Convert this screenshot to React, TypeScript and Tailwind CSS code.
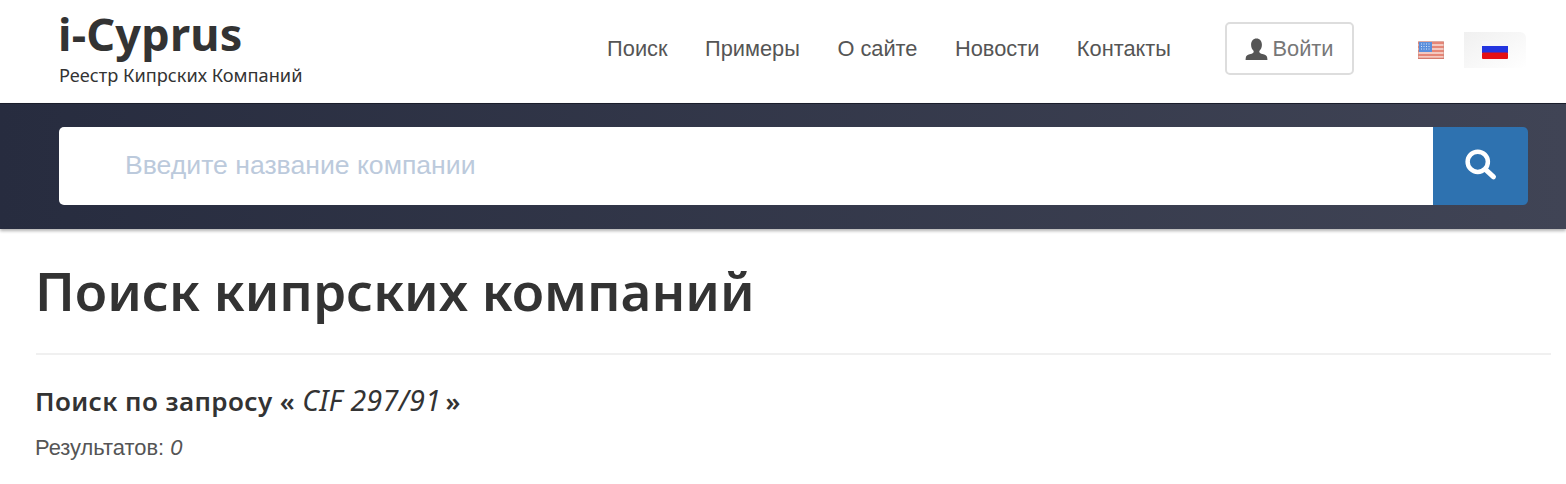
const navItems = ['Поиск', 'Примеры', 'О сайте', 'Новости', 'Контакты'];

function UserIcon() {
  return (
    <svg viewBox="0 0 24 24" preserveAspectRatio="none" className="-ml-[2px] h-[25px] w-[25px]" fill="#555555">
      <path d="M12 1.500c-3.200 0-5.200 2.600-5.200 5.900 0 2.400.9 4.500 2.300 5.700.3.300.3 1 .1 1.500-.3.700-1.200 1.200-2.900 1.800-2.500.8-4.400 1.400-4.600 3.500l-.2 2.100h21l-.2-2.100c-.2-2.100-2.100-2.700-4.600-3.500-1.700-.6-2.600-1.100-2.900-1.800-.2-.5-.2-1.200.1-1.500 1.400-1.200 2.300-3.300 2.300-5.700 0-3.300-2-5.900-5.200-5.900z" />
    </svg>
  );
}

function SearchIcon() {
  return (
    <svg viewBox="0 0 32 32" className="mb-[4px] mr-[2px] h-[36px] w-[36px]" fill="none" stroke="#ffffff" strokeWidth="4">
      <circle cx="14" cy="14" r="9" />
      <path d="M21 21 L28 27.500" strokeLinecap="round" strokeWidth="4.400" />
    </svg>
  );
}

function UsFlag() {
  return (
    <svg viewBox="0 0 26 18" className="h-[18px] w-[26px]">
      <rect width="26" height="18" rx="1" fill="#f4c9c0" />
      <path d="M0 2h26M0 6h26M0 10h26M0 14h26M0 17.500h26" stroke="#e0705f" strokeWidth="1.300" />
      <rect x="1" y="1" width="13" height="10" fill="#5b8fdc" />
      <path d="M3 3h9M3 5.500h9M3 8h9" stroke="#dbe7fa" strokeWidth="1" strokeDasharray="1 1.500" />
      <rect x="0.300" y="0.300" width="25.400" height="17.400" rx="1" fill="none" stroke="#c98a80" strokeWidth="0.600" />
    </svg>
  );
}

function RuFlag() {
  return (
    <svg viewBox="0 0 26 18" className="h-[18px] w-[26px]">
      <rect width="26" height="6" fill="#f6f6fa" />
      <rect y="5" width="26" height="7" fill="#2234e0" />
      <rect y="11.500" width="26" height="6.500" rx="1" fill="#e40f14" />
    </svg>
  );
}

export default function App() {
  return (
    <div className="h-[484px] w-[1566px] overflow-hidden bg-white font-['Liberation_Sans',sans-serif] text-[#333333]">
      <header className="flex h-[103px] items-start justify-between pl-[58px] pr-[40px]">
        <div className="pt-[6px]">
          <div className="font-['Noto_Sans',sans-serif] text-[45px] leading-[56px] font-bold tracking-[0.2px] text-[#333333]">
            i-Cyprus
          </div>
          <div className="mt-[1px] pl-[1px] font-['Noto_Sans',sans-serif] text-[18.200px] leading-[24px] text-[#333333]">
            Реестр Кипрских Компаний
          </div>
        </div>
        <nav className="flex items-start pt-[22px]">
          <ul className="flex h-[55px] items-center gap-[37.500px] pr-[54px]">
            {navItems.map((item) => (
              <li key={item} className="text-[21.800px] text-[#555555]">
                {item}
              </li>
            ))}
          </ul>
          <button className="flex h-[53px] w-[129px] items-center justify-center gap-[4px] rounded-[5px] border-2 border-[#dddddd] pt-[1px] text-[21.800px] text-[#777777]">
            <UserIcon />
            <span className="pt-[1px]">Войти</span>
          </button>
          <div className="ml-[64px] mt-[19px]">
            <UsFlag />
          </div>
          <div className="ml-[20px] mt-[10px] flex h-[36px] w-[62px] items-center justify-center rounded-tr-[6px] bg-gradient-to-br from-[#f0f0f0] to-white">
            <RuFlag />
          </div>
        </nav>
      </header>

      <div className="h-[126px] border-t border-[#1a1d2b] bg-gradient-to-r from-[#272c3f] to-[#404455] px-[59px] pt-[23px] shadow-[0_2px_3px_rgba(0,0,0,0.3)]">
        <div className="flex h-[78px] w-[1469px] overflow-hidden rounded-[5px]">
          <div className="flex flex-1 items-center bg-white pl-[66px] text-[26.600px] text-[#bccadc]">
            Введите название компании
          </div>
          <div className="flex w-[95px] items-center justify-center bg-[#2e72b0]">
            <SearchIcon />
          </div>
        </div>
      </div>

      <main className="pl-[36px] pr-[15px]">
        <h1 className="-ml-[1px] mt-[27px] font-['Noto_Sans',sans-serif] text-[53px] leading-[70px] font-semibold text-[#333333]">
          Поиск кипрских компаний
        </h1>
        <hr className="mt-[27px] border-t-2 border-[#f0f0f0]" />
        <h4 className="-ml-[1px] mt-[28px] font-['Noto_Sans',sans-serif] text-[26px] leading-[34px] font-semibold tracking-[0.4px] text-[#333333]">
          Поиск по запросу « <em className="mr-[-3px] text-[28.400px] font-normal">CIF 297/91</em> »
        </h4>
        <p className="-ml-[1px] mt-[16px] text-[21.900px] leading-[28px] text-[#555555]">
          Результатов: <em>0</em>
        </p>
      </main>
    </div>
  );
}
